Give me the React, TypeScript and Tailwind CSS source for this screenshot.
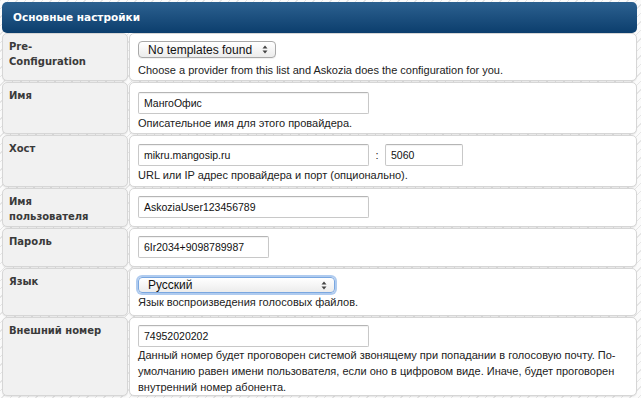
import React from 'react';

const hatch =
  'bg-[repeating-linear-gradient(135deg,#e6e6e6_0px,#e6e6e6_1px,#fbfbfb_1px,#fbfbfb_6px)]';

function SelectArrows() {
  return (
    <svg width="6" height="9" viewBox="0 0 6 9" className="shrink-0">
      <path d="M3 0.5 L5.5 3.5 L0.5 3.5 Z" fill="#444" />
      <path d="M3 8.5 L5.5 5.5 L0.5 5.5 Z" fill="#444" />
    </svg>
  );
}

function MacSelect({ label, width, height, focused }: { label: string; width: string; height: string; focused?: boolean }) {
  return (
    <div
      className={`${width} ${height} flex items-center justify-between pl-[9px] pr-[7px] rounded-[4px] border bg-gradient-to-b from-white to-[#ececec] text-[12px] leading-none text-[#111] font-['Liberation_Sans',Arial,sans-serif] ${
        focused
          ? 'border-[#7aa7e0] shadow-[0_0_0_2px_rgba(110,160,225,0.55)]'
          : 'border-[#a9a9a9] shadow-[0_1px_0_rgba(0,0,0,0.05)]'
      }`}
    >
      <span>{label}</span>
      <SelectArrows />
    </div>
  );
}

function TextInput({ value, width }: { value: string; width: string }) {
  return (
    <div
      className={`${width} h-[22px] flex items-center px-[5px] bg-white border border-[#c8c8c8] border-t-[#b5b5b5] rounded-[2px] shadow-[inset_0_1px_1px_rgba(0,0,0,0.06)] text-[10.5px] text-[#111]`}
    >
      {value}
    </div>
  );
}

function Row({
  label,
  children,
  last,
}: {
  label: React.ReactNode;
  children: React.ReactNode;
  last?: boolean;
}) {
  return (
    <div className="flex gap-[1px]">
      <div className="w-[126px] shrink-0 bg-[#f1f1f1] border border-[#d6d6d6] rounded-[5px] shadow-[0_1px_1px_rgba(0,0,0,0.08)] px-[6px] pt-[5px] font-['DejaVu_Sans',Verdana,sans-serif] font-bold text-[10px] leading-[15px] text-[#3a3a3a]">
        {label}
      </div>
      <div
        className={`flex-1 bg-white border border-[#d6d6d6] rounded-[5px] shadow-[0_1px_1px_rgba(0,0,0,0.08)] pl-[8px] pr-[6px] pt-[7px] text-[11px] leading-[16px] text-[#222] ${
          last ? 'pb-0' : 'pb-[2px]'
        }`}
      >
        {children}
      </div>
    </div>
  );
}

export default function App() {
  return (
    <div className={`w-[641px] h-[398px] overflow-hidden ${hatch} pt-[2px] pl-[2px] pr-[4px] font-['Liberation_Sans',Arial,sans-serif]`}>
      <div className="h-[31px] flex items-center px-[11px] rounded-[5px] bg-gradient-to-b from-[#2c6190] to-[#0b3e6d] text-white font-['DejaVu_Sans',Verdana,sans-serif] font-bold text-[10.5px]">
        Основные настройки
      </div>
      <div className="flex flex-col gap-[1px]">
        <Row label={<>Pre-<br />Configuration</>}>
          <MacSelect label="No templates found" width="w-[138px]" height="h-[17px]" />
          <div className="mt-[4px]">
            Choose a provider from this list and Askozia does the configuration for you.
          </div>
        </Row>
        <Row label="Имя">
          <div className="pt-[2px]">
            <TextInput value="МангоОфис" width="w-[231px]" />
          </div>
          <div className="mt-[1px]">Описательное имя для этого провайдера.</div>
        </Row>
        <Row label="Хост">
          <div className="pt-[1px] flex items-center">
            <TextInput value="mikru.mangosip.ru" width="w-[231px]" />
            <span className="w-[16px] text-center">:</span>
            <TextInput value="5060" width="w-[78px]" />
          </div>
          <div className="mt-[1px] pb-[1px]">URL или IP адрес провайдера и порт (опционально).</div>
        </Row>
        <Row label={<>Имя<br />пользователя</>}>
          <div className="pb-[6px]">
            <TextInput value="AskoziaUser123456789" width="w-[231px]" />
          </div>
        </Row>
        <Row label="Пароль">
          <div className="pb-[6px]">
            <TextInput value="6Ir2034+9098789987" width="w-[131px]" />
          </div>
        </Row>
        <Row label="Язык">
          <div className="pt-[1px]">
            <MacSelect label="Русский" width="w-[197px]" height="h-[16px]" focused />
          </div>
          <div className="mt-[1px] pb-[3px]">Язык воспроизведения голосовых файлов.</div>
        </Row>
        <Row label="Внешний номер" last>
          <TextInput value="74952020202" width="w-[231px]" />
          <div>
            Данный номер будет проговорен системой звонящему при попадании в голосовую почту. По-умолчанию равен имени пользователя, если оно в цифровом виде. Иначе, будет проговорен внутренний номер абонента.
          </div>
        </Row>
      </div>
    </div>
  );
}
